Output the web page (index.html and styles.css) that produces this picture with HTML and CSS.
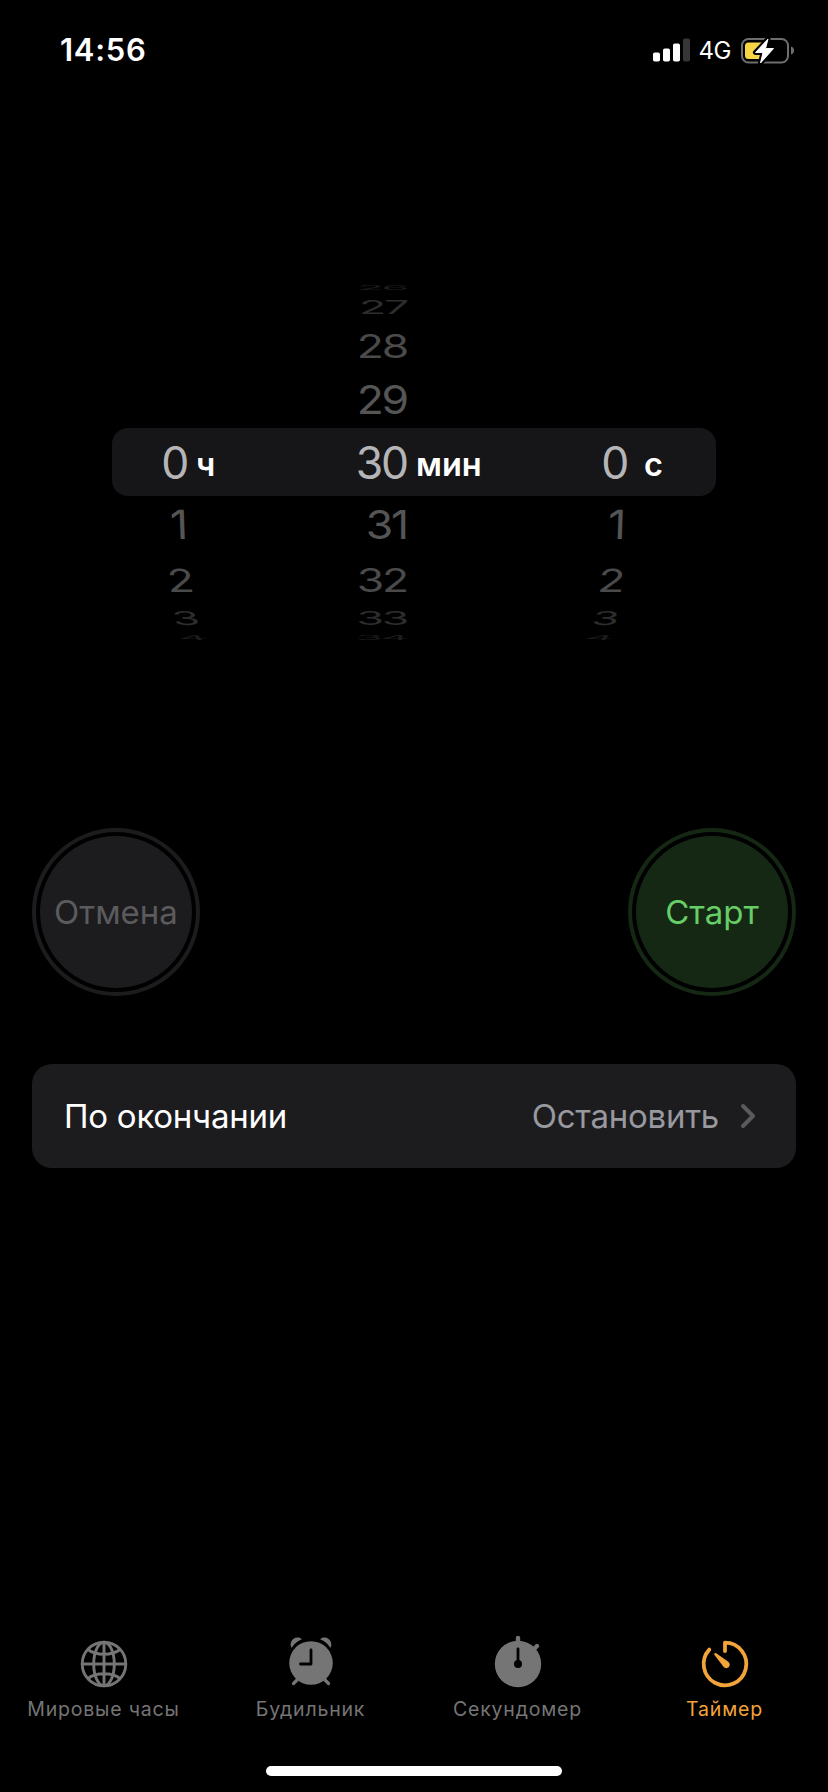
FILE: index.html
```html
<!DOCTYPE html>
<html lang="ru">
<head>
    <meta charset="UTF-8">
    <meta name="viewport" content="width=device-width, initial-scale=1.0">
    <title>Таймер</title>
    <link rel="stylesheet" href="styles.css">
</head>
<body>
    <div class="screen">
        <header class="status-bar">
            <span class="time">14:56</span>
            <div class="status-icons">
                <svg class="signal" width="38" height="24" viewBox="0 0 38 24">
                    <rect x="0" y="14.5" width="7" height="9" rx="1.8" fill="#fff"/>
                    <rect x="10" y="10.5" width="7" height="13" rx="1.8" fill="#fff"/>
                    <rect x="20" y="5.5" width="7" height="18" rx="1.8" fill="#fff"/>
                    <rect x="30" y="0.5" width="7" height="23" rx="1.8" fill="#363636"/>
                </svg>
                <span class="network">4G</span>
                <svg class="battery" width="54" height="30" viewBox="0 0 54 30">
                    <rect x="1" y="4" width="46" height="23.5" rx="6.5" fill="none" stroke="#6e6e70" stroke-width="2"/>
                    <path d="M50 11.5c2 .6 3 2 3 4s-1 3.400-3 4z" fill="#6e6e70"/>
                    <path d="M7.500 7.500H23V24H7.500a3.500 3.500 0 0 1-3.500-3.500V11a3.500 3.500 0 0 1 3.500-3.500z" fill="#f8d447"/>
                    <path d="M27 4 14.500 17.500h7.500L19.500 28 32.500 13.500H24.500z" fill="#fff" stroke="#000" stroke-width="5" stroke-linejoin="round"/>
                    <path d="M27 4 14.500 17.500h7.500L19.500 28 32.500 13.500H24.500z" fill="#fff" stroke="#fff" stroke-width="1" stroke-linejoin="round"/>
                </svg>
            </div>
        </header>

        <main>
            <section class="picker">
                <div class="column hours">
                    <ul class="wheel">
                        <li class="far"></li>
                        <li class="third"></li>
                        <li class="second"></li>
                        <li class="first"></li>
                        <li class="selected"><span>0</span></li>
                        <li class="first"><span>1</span></li>
                        <li class="second"><span>2</span></li>
                        <li class="third"><span>3</span></li>
                        <li class="far"><span>4</span></li>
                    </ul>
                    <span class="unit">ч</span>
                </div>
                <div class="column minutes">
                    <ul class="wheel">
                        <li class="far"><span>26</span></li>
                        <li class="third"><span>27</span></li>
                        <li class="second"><span>28</span></li>
                        <li class="first"><span>29</span></li>
                        <li class="selected"><span>30</span></li>
                        <li class="first"><span>31</span></li>
                        <li class="second"><span>32</span></li>
                        <li class="third"><span>33</span></li>
                        <li class="far"><span>34</span></li>
                    </ul>
                    <span class="unit">мин</span>
                </div>
                <div class="column seconds">
                    <ul class="wheel">
                        <li class="far"></li>
                        <li class="third"></li>
                        <li class="second"></li>
                        <li class="first"></li>
                        <li class="selected"><span>0</span></li>
                        <li class="first"><span>1</span></li>
                        <li class="second"><span>2</span></li>
                        <li class="third"><span>3</span></li>
                        <li class="far"><span>4</span></li>
                    </ul>
                    <span class="unit">с</span>
                </div>
            </section>

            <div class="actions">
                <button type="button" class="round-button cancel"><span>Отмена</span></button>
                <button type="button" class="round-button start"><span>Старт</span></button>
            </div>

            <a class="setting">
                <span class="setting-label">По окончании</span>
                <span class="setting-value">Остановить</span>
                <svg class="chevron" width="16" height="26" viewBox="0 0 16 26">
                    <path d="M3 3l10 10L3 23" fill="none" stroke="#5a5a5e" stroke-width="4" stroke-linecap="round" stroke-linejoin="round"/>
                </svg>
            </a>
        </main>

        <nav class="tab-bar">
            <a class="tab world">
                <svg width="56" height="56" viewBox="0 0 56 56" fill="none" stroke="currentColor" stroke-width="2.900">
                    <circle cx="28" cy="30" r="21.800"/>
                    <ellipse cx="28" cy="30" rx="10.300" ry="21.800"/>
                    <path d="M28 8v44M6 30h44M12 15.500c8 6.300 24 6.300 32 0M12 44.500c8-6.300 24-6.300 32 0"/>
                </svg>
                <span>Мировые часы</span>
            </a>
            <a class="tab alarm">
                <svg width="56" height="56" viewBox="0 0 56 56">
                    <circle cx="28" cy="29" r="21.800" fill="currentColor"/>
                    <path d="M8.200 13.300C6.300 8.500 9.500 3.800 14.200 3.500c2-.1 3.500.5 4.700 1.800-4.400 1.800-7.400 4-9.600 7.800-.3.500-.8.600-1.100.2zM47.800 13.300c1.900-4.800-1.300-9.500-6-9.800-2-.1-3.500.5-4.700 1.800 4.400 1.800 7.400 4 9.600 7.800.3.500.8.600 1.100.2z" fill="currentColor"/>
                    <path d="M14 46l-3.500 3.500M42 46l3.500 3.500" stroke="currentColor" stroke-width="3.200" stroke-linecap="round"/>
                    <path d="M28 16v14H17.500" fill="none" stroke="#000" stroke-width="2.800" stroke-linecap="round" stroke-linejoin="round"/>
                </svg>
                <span>Будильник</span>
            </a>
            <a class="tab stopwatch">
                <svg width="56" height="56" viewBox="0 0 56 56">
                    <circle cx="28" cy="30" r="23.200" fill="currentColor"/>
                    <path d="M28 10V4M43 16l4-4" stroke="currentColor" stroke-width="4.400" stroke-linecap="round"/>
                    <path d="M28 15v14" stroke="#000" stroke-width="2.800" stroke-linecap="round"/>
                    <circle cx="28" cy="30" r="4" fill="#000"/>
                </svg>
                <span>Секундомер</span>
            </a>
            <a class="tab timer active">
                <svg width="56" height="56" viewBox="0 0 56 56">
                    <path d="M28 17V8.700A21.300 21.300 0 1 1 12.300 15.600" fill="none" stroke="currentColor" stroke-width="3.800" stroke-linecap="round" stroke-linejoin="round"/>
                    <path d="M17.600 19.300c.4-.5 1-.5 1.600-.1L31 27.400c2 1.600 2.300 4 .9 5.700-1.500 1.600-4 1.500-5.600-.5L17.500 21c-.4-.6-.3-1.200.1-1.700z" fill="currentColor"/>
                </svg>
                <span>Таймер</span>
            </a>
        </nav>
        <div class="home-indicator"></div>
    </div>
</body>
</html>
```
FILE: styles.css
```css
:root {
    --surface: #1c1c1e;
    --band: #161618;
    --gray: #757575;
    --orange: #f2a33a;
}

* {
    box-sizing: border-box;
    margin: 0;
    padding: 0;
}

body {
    font-family: Inter, "Liberation Sans", sans-serif;
    background: #000;
    color: #fff;
}

.screen {
    width: 828px;
    height: 1792px;
    display: flex;
    flex-direction: column;
    overflow: hidden;
}

/* Status bar */
.status-bar {
    display: flex;
    justify-content: space-between;
    align-items: center;
    height: 99px;
    padding: 0 33px 0 60px;
}

.time {
    font-size: 31px;
    font-weight: 600;
    letter-spacing: 0.7px;
}

.status-icons {
    display: flex;
    align-items: center;
}

.network {
    margin: 1px 10px 0 8px;
    font-size: 24px;
    letter-spacing: -0.5px;
}

/* Wheel picker */
.picker {
    position: relative;
    display: grid;
    grid-template-columns: 220px 220px 164px;
    margin: 183.5px 112px 0;
}

.picker::before {
    content: "";
    position: absolute;
    top: 145.5px;
    left: 0;
    width: 100%;
    height: 68px;
    border-radius: 16px;
    background: var(--band);
}

.column {
    position: relative;
    display: flex;
    align-items: center;
}

.wheel {
    width: 75px;
    list-style: none;
    font-size: 44.5px;
    font-weight: 400;
    letter-spacing: -2.2px;
}

.wheel li {
    display: flex;
    justify-content: flex-end;
    align-items: center;
    white-space: nowrap;
}

.wheel span {
    line-height: 46px;
    transform-origin: 100% 50%;
}

.wheel .selected {
    height: 64px;
    color: #b5b5b7;
}

.wheel .first {
    height: 61px;
    color: #555;
}

.wheel .second {
    height: 48px;
    color: #4a4a4a;
}

.wheel .third {
    height: 29px;
    color: #2d2d2d;
}

.wheel .far {
    height: 10px;
    color: #1c1c1c;
}

.first span { transform: scaleY(0.9); }
.second span { transform: scaleY(0.72); }
.third span { transform: scaleY(0.43); }
.far span { transform: scaleY(0.15); }

/* the outer wheels bend towards the middle one */
.hours .first span { transform: translateX(-1px) skewX(2deg) scaleY(0.9); }
.hours .second span { transform: translateX(5px) skewX(6deg) scaleY(0.72); }
.hours .third span { transform: translateX(10px) skewX(14deg) scaleY(0.43); }
.hours .far span { transform: translateX(18px) skewX(35deg) scaleY(0.15); }
.seconds .first span { transform: translateX(-3px) skewX(-2deg) scaleY(0.9); }
.seconds .second span { transform: translateX(-4px) skewX(-6deg) scaleY(0.72); }
.seconds .third span { transform: translateX(-10px) skewX(-14deg) scaleY(0.43); }
.seconds .far span { transform: translateX(-15px) skewX(-35deg) scaleY(0.15); }

.unit {
    margin: 4px 0 0 9px;
    font-size: 32.5px;
    font-weight: 600;
}

.seconds .unit {
    margin-left: 17px;
}

/* Buttons */
.actions {
    display: flex;
    justify-content: space-between;
    margin: 185.5px 32px 0;
}

.round-button {
    width: 168px;
    height: 168px;
    padding: 4px;
    border: 4px solid var(--surface);
    border-radius: 50%;
    background: none;
    font-family: inherit;
    font-size: 33px;
}

.round-button span {
    display: flex;
    justify-content: center;
    align-items: center;
    height: 100%;
    border-radius: 50%;
}

.cancel {
    color: #5b5b5e;
}

.cancel span {
    background: var(--surface);
}

.start {
    border-color: #142814;
    color: #67ce67;
}

.start span {
    background: #142814;
}

/* Setting row */
.setting {
    display: flex;
    align-items: center;
    height: 104px;
    margin: 68px 32px 0;
    padding: 0 40px 0 32px;
    border-radius: 20px;
    background: var(--surface);
    font-size: 33px;
    letter-spacing: -0.25px;
}

.setting-value {
    margin-left: auto;
    color: #98989f;
}

.chevron {
    margin-left: 21px;
}

/* Tab bar */
.tab-bar {
    display: grid;
    grid-template-columns: repeat(4, 1fr);
    margin-top: auto;
    height: 132px;
}

.tab {
    display: flex;
    flex-direction: column;
    align-items: center;
    color: var(--gray);
    font-size: 19.5px;
    letter-spacing: 0.8px;
    white-space: nowrap;
}

.tab span {
    margin-top: 7px;
}

.tab.active {
    color: var(--orange);
}

.home-indicator {
    width: 296px;
    height: 10px;
    margin: 0 auto 16px;
    border-radius: 5px;
    background: #fff;
}
```
